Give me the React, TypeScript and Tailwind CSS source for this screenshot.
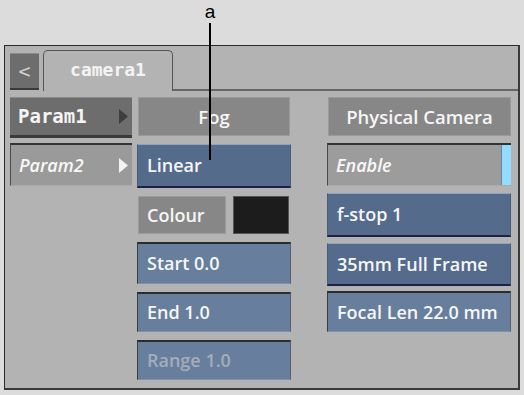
import React from "react";

const sans = { fontFamily: '"Open Sans", "DejaVu Sans", sans-serif' };
const mono = { fontFamily: '"DejaVu Sans Mono", "Liberation Mono", monospace' };

function Blue({ label, className = "" }: { label: string; className?: string }) {
  return (
    <div
      className={`flex items-center pl-[9px] bg-[#556b8c] border-t border-t-[#8ea4c2] border-b-2 border-b-[#1f1f48] border-x border-x-[#4a5d7a] text-[18px] font-semibold text-[#f6f6f6] ${className}`}
      style={sans}
    >
      {label}
    </div>
  );
}

function Field({ label, className = "", dim = false }: { label: string; className?: string; dim?: boolean }) {
  return (
    <div
      className={`flex items-center pl-[9px] bg-[#677e9d] border-t-2 border-t-[#2c2c2c] border-l border-l-[#3c3c3c] border-r border-r-[#55606e] border-b border-b-[#8190a4] text-[18px] font-semibold ${dim ? "text-[#a3adbb]" : "text-[#f6f6f6]"} ${className}`}
      style={sans}
    >
      {label}
    </div>
  );
}

function Header({ label, className = "" }: { label: string; className?: string }) {
  return (
    <div
      className={`flex items-center justify-center bg-[#878787] border border-[#9a9a9a] text-[18.5px] font-semibold text-[#f6f6f6] ${className}`}
      style={sans}
    >
      {label}
    </div>
  );
}

export default function App() {
  return (
    <div className="relative w-[524px] h-[395px] bg-[#dcdcdc] overflow-hidden">
      <div className="absolute left-[202px] top-[2px] w-[16px] text-center text-[19px] leading-[20px] text-black" style={{ fontFamily: '"Liberation Sans", Arial, sans-serif' }}>
        a
      </div>
      <div className="absolute left-[209px] top-[23px] w-[2px] h-[137px] bg-black z-10" />

      <div className="absolute left-[4px] top-[45px] w-[516px] h-[345px] bg-[#b3b3b3] border-t border-l border-[#2a2a2a] border-r-2 border-b-2 border-r-[#3a3a3a] border-b-[#3a3a3a] flex flex-col">
        {/* tab bar */}
        <div className="flex items-end h-[45px] shrink-0">
          <div className="ml-[5px] mb-[1px] w-[29px] h-[37px] flex items-center justify-center bg-[#6d6d6d] border-t border-t-[#8a8a8a] border-b-2 border-b-[#3a3a3a] text-[20px] text-[#cfcfcf]" style={mono}>
            &lt;
          </div>
          <div className="ml-[4px] w-[130px] h-[41px] flex items-center justify-center border-t border-x border-[#555555] rounded-t-[5px] bg-[#b3b3b3] text-[18px] font-bold text-[#f4f4f4] pb-[3px]" style={mono}>
            camera1
          </div>
          <div className="flex-1 h-full border-b-2 border-b-[#666666]" />
        </div>

        {/* content */}
        <div className="flex pt-[6px] pl-[5px]">
          {/* col 1 */}
          <div className="flex flex-col w-[122px]">
            <div className="h-[41px] flex items-center justify-between pl-[8px] pr-[4px] bg-[#6d6d6d] border-t border-t-[#8a8a8a] border-b-[3px] border-b-[#3b3b3b] text-[19px] font-bold text-[#f4f4f4]" style={mono}>
              <span>Param1</span>
              <svg width="9" height="15" viewBox="0 0 9 15"><polygon points="0,0 9,7.5 0,15" fill="#3e3e3e" /></svg>
            </div>
            <div className="mt-[5px] h-[43px] flex items-center justify-between pl-[8px] pr-[4px] bg-[#9a9a9a] border-t-2 border-t-[#333333] border-l border-l-[#4a4a4a] border-b border-b-[#aaaaaa] text-[18px] font-semibold italic text-[#f8f8f8]" style={sans}>
              <span>Param2</span>
              <svg width="9" height="15" viewBox="0 0 9 15"><polygon points="0,0 9,7.5 0,15" fill="#f2f2f2" /></svg>
            </div>
          </div>

          {/* col 2 */}
          <div className="flex flex-col w-[154px] ml-[5px]">
            <Header label="Fog" className="h-[39px] ml-[1px] w-[152px]" />
            <Blue label="Linear" className="mt-[8px] h-[44px]" />
            <div className="mt-[8px] h-[38px] flex">
              <div className="w-[88px] ml-[1px] flex items-center pl-[8px] bg-[#878787] border border-[#9a9a9a] text-[18px] font-semibold text-[#f6f6f6]" style={sans}>
                Colour
              </div>
              <div className="ml-[7px] w-[56px] bg-[#1c1c1c] border border-[#555]" />
            </div>
            <Field label="Start 0.0" className="mt-[8px] h-[42px]" />
            <Field label="End 1.0" className="mt-[8px] h-[40px]" />
            <Field label="Range 1.0" dim className="mt-[8px] h-[40px]" />
          </div>

          {/* col 3 */}
          <div className="flex flex-col w-[184px] ml-[36px]">
            <Header label="Physical Camera" className="h-[39px] ml-[1px] w-[183px]" />
            <div className="mt-[7px] h-[43px] flex items-stretch bg-[#9c9c9c] border-t-2 border-t-[#333333] border-l border-l-[#4a4a4a] border-b border-b-[#aaaaaa]">
              <div className="flex-1 flex items-center pl-[8px] text-[18px] font-semibold italic text-[#f8f8f8]" style={sans}>
                Enable
              </div>
              <div className="w-[10px] bg-[#92dcff] border-l border-l-[#6a8a9a]" />
            </div>
            <Blue label="f-stop 1" className="mt-[7px] h-[44px]" />
            <Blue label="35mm Full Frame" className="mt-[6px] h-[43px]" />
            <Field label="Focal Len 22.0 mm" className="mt-[5px] h-[41px]" />
          </div>
        </div>
      </div>
    </div>
  );
}
